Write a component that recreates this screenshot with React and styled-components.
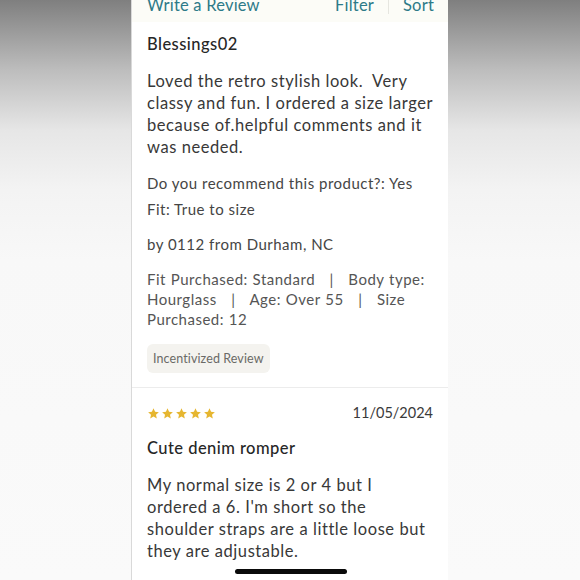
import { createGlobalStyle, styled } from "styled-components";

const GlobalStyle = createGlobalStyle`
  html, body {
    margin: 0;
    padding: 0;
  }
  body {
    height: 580px;
    overflow: hidden;
    background: linear-gradient(180deg, #7f7f7f 0px, #bdbdbd 70px, #e6e6e6 130px, #f3f3f3 190px, #f8f8f8 260px, #fafafa 580px);
    font-family: Lato, "Open Sans", sans-serif;
  }
`;

const stars = [0, 1, 2, 3, 4];

const App = () => (
  <>
    <GlobalStyle />
    <Phone>
      <TopBar>
        <BarLink>Write a Review</BarLink>
        <BarActions>
          <BarLink>Filter</BarLink>
          <BarDivider />
          <BarLink>Sort</BarLink>
        </BarActions>
      </TopBar>

      <Review>
        <Title>Blessings02</Title>
        <Body>
          Loved the retro stylish look.&nbsp; Very classy and fun. I ordered a
          size larger because of.helpful comments and it was needed.
        </Body>
        <Meta>Do you recommend this product?: Yes</Meta>
        <Meta $gap={6}>Fit: True to size</Meta>
        <Meta $gap={15}>by 0112 from Durham, NC</Meta>
        <Details>
          Fit Purchased: Standard &nbsp;&nbsp;|&nbsp;&nbsp; Body type: Hourglass
          &nbsp;&nbsp;|&nbsp;&nbsp; Age: Over 55 &nbsp;&nbsp;|&nbsp;&nbsp; Size
          Purchased: 12
        </Details>
        <Badge>Incentivized Review</Badge>
      </Review>

      <Review $divided>
        <RatingRow>
          <Stars>
            {stars.map((s) => (
              <Star key={s} viewBox="0 0 24 24">
                <path d="M12 2.5l2.9 6.4 7 .7-5.3 4.7 1.5 6.9L12 17.6l-6.1 3.6 1.5-6.9L2.1 9.6l7-.7z" />
              </Star>
            ))}
          </Stars>
          <DateText>11/05/2024</DateText>
        </RatingRow>
        <Title $top={15}>Cute denim romper</Title>
        <Body $top={16}>
          My normal size is 2 or 4 but I ordered a 6. I'm short so the shoulder
          straps are a little loose but they are adjustable.
        </Body>
      </Review>

      <HomeIndicator />
    </Phone>
  </>
);

const Phone = styled.div`
  position: relative;
  width: 316px;
  height: 580px;
  margin: 0 auto;
  background: #ffffff;
  box-shadow: -1px 0 0 #d9d9d9;
  overflow: hidden;
  color: #2b2b2b;
`;

const TopBar = styled.div`
  height: 22px;
  display: flex;
  justify-content: space-between;
  align-items: flex-start;
  padding: 0 14px 0 15px;
  background: #fcfcf7;
  overflow: hidden;
`;

const BarActions = styled.div`
  display: flex;
  align-items: flex-start;
  gap: 14px;
`;

const BarLink = styled.span`
  margin-top: -5px;
  font-size: 16.5px;
  line-height: 20px;
  color: #2d7a88;
  letter-spacing: 0.2px;
`;

const BarDivider = styled.span`
  width: 1px;
  height: 14px;
  background: #e6e6e0;
`;

const Review = styled.section`
  padding: 0 15px 14px;
  border-top: ${(p) => (p.$divided ? "1px solid #ececec" : "none")};
`;

const Title = styled.h3`
  margin: ${(p) => p.$top || 12}px 0 0;
  font-size: 16.5px;
  line-height: 20px;
  font-weight: 500;
  color: #262626;
  letter-spacing: 0.45px;
`;

const Body = styled.p`
  margin: ${(p) => p.$top || 16}px 0 0;
  font-size: 16.5px;
  line-height: 22px;
  color: #383838;
  letter-spacing: 0.56px;
`;

const Meta = styled.p`
  margin: ${(p) => p.$gap ?? 15}px 0 0;
  font-size: 15px;
  line-height: 20px;
  color: #454545;
  letter-spacing: 0.5px;
`;

const Details = styled.p`
  margin: 15px 0 0;
  font-size: 15px;
  line-height: 20px;
  color: #555;
  letter-spacing: 0.5px;
  word-spacing: 0.5px;
`;

const Badge = styled.span`
  display: inline-block;
  margin-top: 15px;
  padding: 7px 6px;
  background: #f4f3ef;
  border-radius: 6px;
  font-size: 12.5px;
  line-height: 15px;
  color: #6a6a66;
  letter-spacing: 0.1px;
`;

const RatingRow = styled.div`
  display: flex;
  justify-content: space-between;
  align-items: center;
  margin-top: 15px;
`;

const Stars = styled.div`
  display: flex;
  gap: 1px;
`;

const Star = styled.svg`
  width: 13px;
  height: 13px;
  fill: #e6b630;
`;

const DateText = styled.span`
  font-size: 14.5px;
  line-height: 20px;
  color: #3a3a3a;
  letter-spacing: 0;
`;

const HomeIndicator = styled.div`
  position: absolute;
  left: 103px;
  bottom: 6px;
  width: 112px;
  height: 5px;
  border-radius: 3px;
  background: #0a0a0a;
`;

export default App;
